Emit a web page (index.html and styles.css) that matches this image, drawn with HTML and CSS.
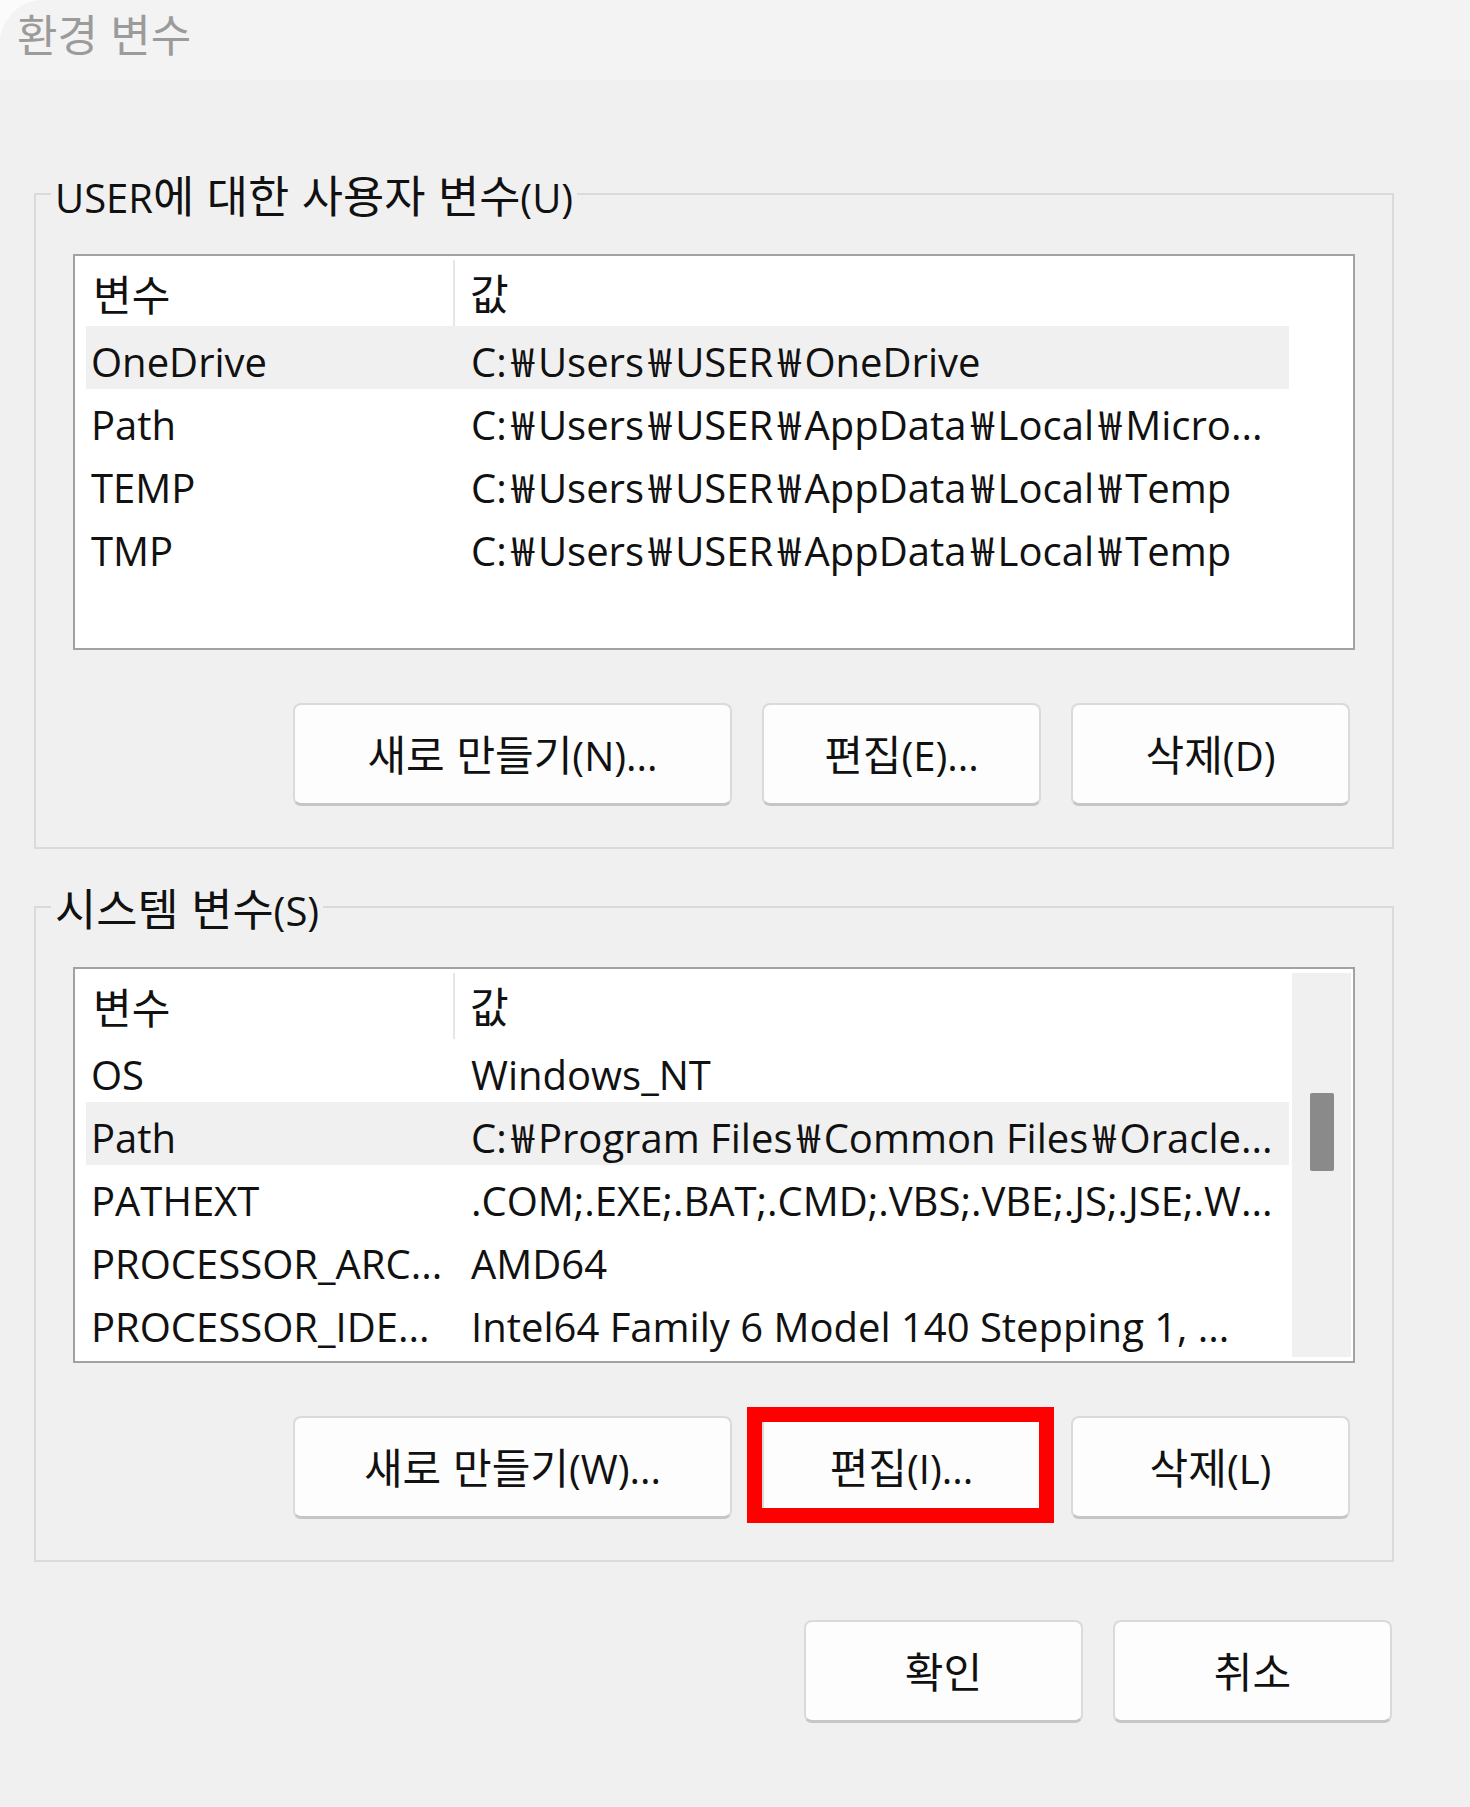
FILE: index.html
```html
<!DOCTYPE html>
<html lang="ko">
<head>
<meta charset="utf-8">
<title>환경 변수</title>
<link rel="stylesheet" href="styles.css">
</head>
<body>
<div class="window">
  <div class="titlebar"><span class="title">환경 변수</span></div>
  <div class="content">
    <fieldset class="group">
      <legend>USER<span class="ko">에 대한 사용자 변수</span>(U)</legend>
      <div class="listbox">
        <div class="list-main">
          <div class="list-header">
            <div class="cell cell-name"><span class="ko">변수</span></div>
            <div class="cell cell-value"><span class="ko">값</span></div>
          </div>
          <div class="row selected"><div class="cell cell-name">OneDrive</div><div class="cell cell-value">C:<span class="won">₩</span>Users<span class="won">₩</span>USER<span class="won">₩</span>OneDrive</div></div>
          <div class="row"><div class="cell cell-name">Path</div><div class="cell cell-value">C:<span class="won">₩</span>Users<span class="won">₩</span>USER<span class="won">₩</span>AppData<span class="won">₩</span>Local<span class="won">₩</span>Micro...</div></div>
          <div class="row"><div class="cell cell-name">TEMP</div><div class="cell cell-value">C:<span class="won">₩</span>Users<span class="won">₩</span>USER<span class="won">₩</span>AppData<span class="won">₩</span>Local<span class="won">₩</span>Temp</div></div>
          <div class="row"><div class="cell cell-name">TMP</div><div class="cell cell-value">C:<span class="won">₩</span>Users<span class="won">₩</span>USER<span class="won">₩</span>AppData<span class="won">₩</span>Local<span class="won">₩</span>Temp</div></div>
        </div>
        <div class="list-side"></div>
      </div>
      <div class="btn-row">
        <button class="btn btn-wide"><span class="ko">새로 만들기</span>(N)...</button>
        <button class="btn"><span class="ko">편집</span>(E)...</button>
        <button class="btn"><span class="ko">삭제</span>(D)</button>
      </div>
    </fieldset>

    <fieldset class="group group-system">
      <legend><span class="ko">시스템 변수</span>(S)</legend>
      <div class="listbox">
        <div class="list-main">
          <div class="list-header">
            <div class="cell cell-name"><span class="ko">변수</span></div>
            <div class="cell cell-value"><span class="ko">값</span></div>
          </div>
          <div class="row"><div class="cell cell-name">OS</div><div class="cell cell-value">Windows_NT</div></div>
          <div class="row selected"><div class="cell cell-name">Path</div><div class="cell cell-value">C:<span class="won">₩</span>Program Files<span class="won">₩</span>Common Files<span class="won">₩</span>Oracle...</div></div>
          <div class="row"><div class="cell cell-name">PATHEXT</div><div class="cell cell-value">.COM;.EXE;.BAT;.CMD;.VBS;.VBE;.JS;.JSE;.W...</div></div>
          <div class="row"><div class="cell cell-name">PROCESSOR_ARC...</div><div class="cell cell-value">AMD64</div></div>
          <div class="row"><div class="cell cell-name">PROCESSOR_IDE...</div><div class="cell cell-value">Intel64 Family 6 Model 140 Stepping 1, ...</div></div>
        </div>
        <div class="list-side scrollbar"><div class="thumb"></div></div>
      </div>
      <div class="btn-row">
        <button class="btn btn-wide"><span class="ko">새로 만들기</span>(W)...</button>
        <div class="highlight-wrap">
          <button class="btn"><span class="ko">편집</span>(I)...</button>
          <div class="highlight"></div>
        </div>
        <button class="btn"><span class="ko">삭제</span>(L)</button>
      </div>
    </fieldset>

    <div class="dialog-buttons">
      <button class="btn"><span class="ko">확인</span></button>
      <button class="btn"><span class="ko">취소</span></button>
    </div>
  </div>
</div>
</body>
</html>
```

FILE: styles.css
```css
html {
  background: #fbfbfb;
}
body {
  margin: 0;
  width: 1470px;
  height: 1807px;
  overflow: hidden;
  font-family: "Open Sans", "Noto Sans CJK KR", sans-serif;
  color: #111;
}
.ko {
  font-family: "Noto Sans CJK KR", sans-serif;
  font-size: 1.05em;
}
.won {
  margin: 0 4px 0 5px;
}
.window {
  width: 1470px;
  height: 1807px;
  background: #f0f0f0;
  border-top-left-radius: 44px;
  overflow: hidden;
}
.titlebar {
  height: 80px;
  background: #f3f3f3;
  box-sizing: border-box;
  padding-left: 17px;
}
.title {
  font-family: "Noto Sans CJK KR", sans-serif;
  font-size: 44px;
  line-height: 66px;
  color: #9b9b9b;
}
.content {
  display: flex;
  flex-direction: column;
}
.group {
  margin: 92px 0 0 34px;
  width: 1360px;
  box-sizing: border-box;
  border: 2px solid #dadada;
  padding: 38px 37px 41px 37px;
  min-width: 0;
}
.group legend {
  margin-left: -22px;
  padding: 0 4px 0 4px;
  font-size: 40px;
  line-height: 44px;
  height: 44px;
  white-space: nowrap;
  color: #111;
}
.group legend .ko {
  font-size: 1.12em;
}
.group-system {
  margin-top: 36px;
}
.listbox {
  height: 396px;
  box-sizing: border-box;
  border: 2px solid #a2a2a2;
  background: #fff;
  display: flex;
  padding: 4px 2px 4px 11px;
  overflow: hidden;
}
.list-main {
  width: 1203px;
  display: flex;
  flex-direction: column;
}
.list-side {
  flex: 1;
  margin-left: 3px;
}
.scrollbar {
  background: #f0f0f0;
  display: flex;
  justify-content: center;
  padding-top: 120px;
}
.thumb {
  width: 24px;
  height: 78px;
  background: #8a8a8a;
  border-radius: 2px;
}
.list-header {
  height: 66px;
  display: flex;
  align-items: center;
  flex-shrink: 0;
}
.list-header .cell-name {
  border-right: 2px solid #e6e6e6;
  height: 100%;
  display: flex;
  align-items: center;
  padding-left: 7px;
}
.list-header .cell-value {
  padding-left: 15px;
}
.cell {
  font-size: 40px;
  line-height: 50px;
  white-space: nowrap;
  box-sizing: border-box;
}
.cell-name {
  width: 369px;
  padding-left: 5px;
}
.cell-value {
  flex: 1;
  padding-left: 16px;
}
.row {
  height: 63px;
  display: flex;
  align-items: center;
  flex-shrink: 0;
}
.row .cell {
  padding-top: 9px;
}
.row.selected {
  background: #f0f0f0;
}
.btn-row {
  display: flex;
  justify-content: flex-end;
  gap: 30px;
  margin-top: 53px;
  margin-right: 5px;
}
.btn {
  width: 279px;
  height: 103px;
  box-sizing: border-box;
  background: #fdfdfd;
  border: 2px solid #dadada;
  border-bottom: 3px solid #c6c6c6;
  border-radius: 8px;
  font-family: "Open Sans", "Noto Sans CJK KR", sans-serif;
  font-size: 40px;
  line-height: 50px;
  color: #111;
  padding: 0;
}
.btn-wide {
  width: 439px;
}
.highlight-wrap {
  position: relative;
  display: flex;
}
.highlight {
  position: absolute;
  left: -15px;
  top: -9px;
  right: -13px;
  bottom: -4px;
  border: 15px solid #ff0000;
  pointer-events: none;
}
.dialog-buttons {
  display: flex;
  justify-content: flex-end;
  gap: 30px;
  margin-top: 58px;
  margin-right: 78px;
}
```
